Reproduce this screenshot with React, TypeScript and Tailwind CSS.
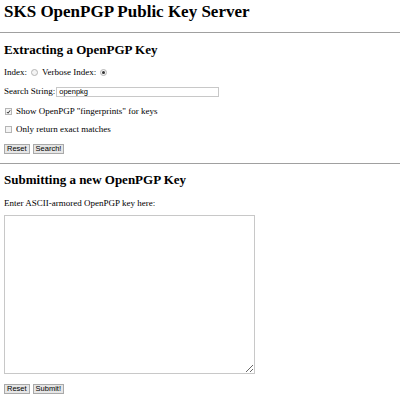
import { useState } from 'react';

const serif = "font-['Liberation_Serif',serif]";

function Btn({ children }: { children: React.ReactNode }) {
  return (
    <button
      type="button"
      className="h-[10px] px-[2px] border border-[#a9a9a9] bg-[#e6e6e6] text-[7.5px] leading-none text-black font-['Liberation_Sans',sans-serif]"
    >
      {children}
    </button>
  );
}

function Radio({ checked }: { checked?: boolean }) {
  return (
    <span className="inline-flex h-[7px] w-[7px] items-center justify-center rounded-full border border-[#b5b5b5] bg-[#f4f4f4]">
      {checked && <span className="h-[3px] w-[3px] rounded-full bg-[#333]" />}
    </span>
  );
}

function Check({ checked }: { checked?: boolean }) {
  return (
    <span className="inline-flex h-[7px] w-[7px] items-center justify-center border border-[#b5b5b5] bg-[#f4f4f4]">
      {checked && (
        <svg width="6" height="6" viewBox="0 0 6 6">
          <path d="M1 3 L2.5 4.5 L5 1" stroke="#333" strokeWidth="1.2" fill="none" />
        </svg>
      )}
    </span>
  );
}

export default function App() {
  const [search, setSearch] = useState('openpkg');

  return (
    <div className={`${serif} w-[400px] h-[400px] bg-white text-black px-[4px] overflow-hidden`}>
      <h1 className="pt-[2px] text-[17px] font-bold leading-[20px]">SKS OpenPGP Public Key Server</h1>
      <hr className="mt-[10px] -mx-[4px] border-t border-[#a0a0a0]" />

      <h2 className="mt-[9px] text-[13px] font-bold leading-[16px]">Extracting a OpenPGP Key</h2>
      <div className="mt-[9px] flex h-[11px] items-center gap-[4px] text-[9px] leading-[11px]">
        <span>Index:</span>
        <Radio />
        <span>Verbose Index:</span>
        <Radio checked />
      </div>
      <div className="mt-[8px] flex h-[11px] items-center gap-[1px] text-[9px] leading-[11px]">
        <span>Search String:</span>
        <input
          value={search}
          onChange={(e) => setSearch(e.target.value)}
          className="h-[10px] w-[163px] border border-[#c8c8c8] px-[2px] text-[7.5px] leading-none font-['Liberation_Sans',sans-serif] outline-none"
        />
      </div>
      <div className="mt-[9px] flex h-[11px] items-center gap-[4px] pl-[1px] text-[9px] leading-[11px]">
        <Check checked />
        <span>Show OpenPGP "fingerprints" for keys</span>
      </div>
      <div className="mt-[7px] flex h-[11px] items-center gap-[4px] pl-[1px] text-[9px] leading-[11px]">
        <Check />
        <span>Only return exact matches</span>
      </div>
      <div className="mt-[9px] flex gap-[3px]">
        <Btn>Reset</Btn>
        <Btn>Search!</Btn>
      </div>
      <hr className="mt-[9px] -mx-[4px] border-t border-[#a0a0a0]" />

      <h2 className="mt-[8px] text-[13px] font-bold leading-[16px]">Submitting a new OpenPGP Key</h2>
      <p className="mt-[10px] text-[9px] leading-[11px]">Enter ASCII-armored OpenPGP key here:</p>
      <textarea className="mt-[6px] block h-[159px] w-[251px] border border-[#c8c8c8] outline-none" />
      <div className="mt-[10px] flex gap-[3px]">
        <Btn>Reset</Btn>
        <Btn>Submit!</Btn>
      </div>
    </div>
  );
}
